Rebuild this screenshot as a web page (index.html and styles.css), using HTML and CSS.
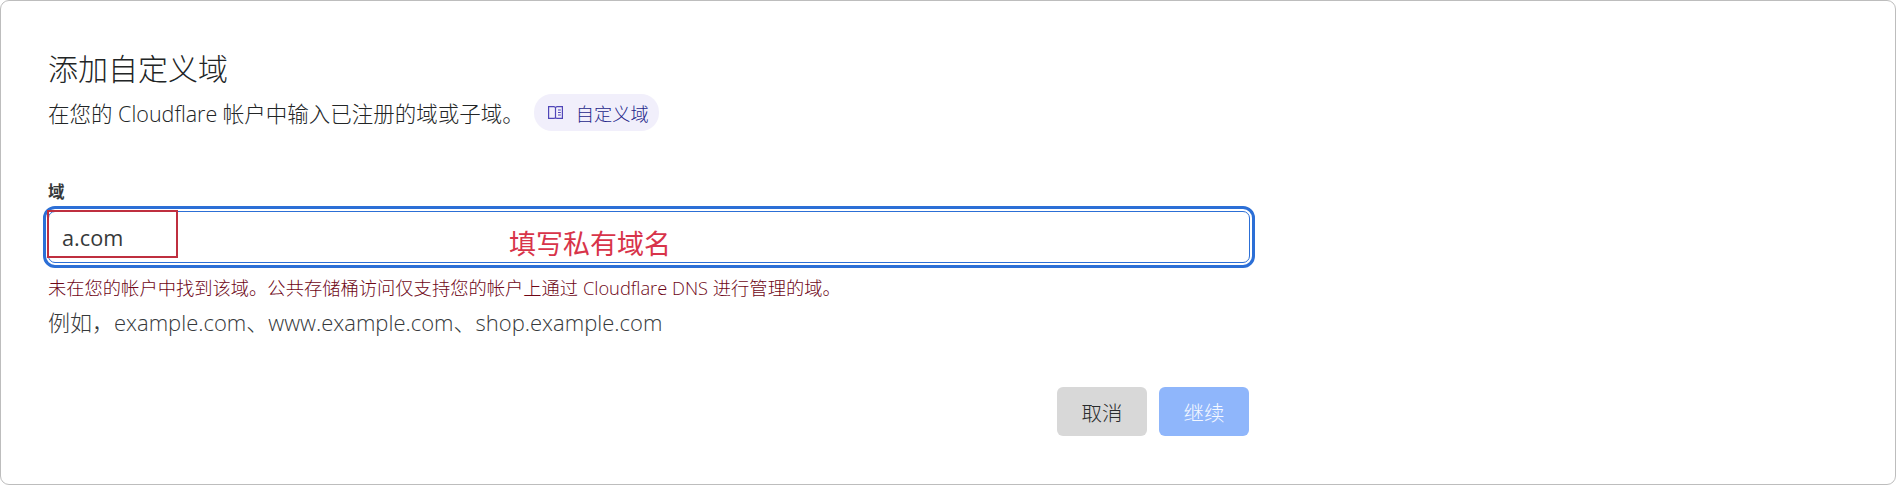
FILE: index.html
```html
<!DOCTYPE html>
<html lang="zh-CN">
<head>
    <meta charset="UTF-8">
    <meta name="viewport" content="width=device-width, initial-scale=1.0">
    <title>添加自定义域</title>
    <link rel="stylesheet" href="styles.css">
</head>
<body>

<div class="card">
    <h1>添加自定义域</h1>
    <div class="intro">
        <p>在您的 Cloudflare 帐户中输入已注册的域或子域。</p>
        <a class="doc-pill" href="#">
            <svg class="doc-icon" viewBox="0 0 15 13" fill="none" stroke="currentColor" stroke-width="1.2">
                <path d="M.6.6H6L7.500 1.500 9 .6h5.400v11.800H9L7.500 12 6 12.400H.6z"/>
                <path d="M7.500 1.500V12"/>
                <path d="M10 4h2.800M10 6.500h2.800M10 9h2.800" stroke-width="1"/>
            </svg>
            自定义域
        </a>
    </div>

    <form class="domain-form">
        <label for="domain">域</label>
        <div class="field">
            <input id="domain" type="text" value="a.com">
            <span class="mark-box"></span>
            <span class="mark-text">填写私有域名</span>
        </div>
        <p class="error">未在您的帐户中找到该域。公共存储桶访问仅支持您的帐户上通过 Cloudflare DNS 进行管理的域。</p>
        <p class="hint">例如，example.com、www.example.com、shop.example.com</p>

        <div class="actions">
            <button type="button" class="btn-cancel">取消</button>
            <button type="button" class="btn-continue">继续</button>
        </div>
    </form>
</div>

</body>
</html>
```

FILE: styles.css
```css
* {
    box-sizing: border-box;
}
body {
    margin: 0;
    background: white;
    font-family: "Open Sans", "Noto Sans CJK SC", sans-serif;
    color: #222526;
}
.card {
    height: 485px;
    padding: 48px 0 0 47px;
    border: 1px solid #bdbdbd;
    border-radius: 9px;
}
h1 {
    margin: 0;
    font-size: 30px;
    font-weight: 300;
    line-height: 40px;
}
.intro {
    display: flex;
    align-items: center;
    gap: 10px;
    margin-top: 5px;
}
.intro p {
    margin: 0;
    font-size: 21.500px;
    font-weight: 300;
}
.doc-pill {
    display: flex;
    align-items: center;
    gap: 13px;
    height: 37px;
    padding: 0 10px 0 14px;
    border-radius: 18px;
    background: #f1effb;
    color: #241f8a;
    font-size: 18.200px;
    font-weight: 300;
    text-decoration: none;
}
.doc-icon {
    width: 15px;
    height: 13px;
    color: #5046b8;
}
.domain-form {
    width: 1202px;
    margin-top: 51px;
}
label {
    display: block;
    font-size: 16.500px;
    font-weight: 700;
    line-height: 20px;
    color: #36393a;
}
.field {
    position: relative;
    margin-top: 9px;
}
input {
    display: block;
    width: 100%;
    height: 52px;
    padding: 0 13px;
    border: 1px solid #2c6fd6;
    border-radius: 7px;
    outline: 3px solid #2c6fd6;
    outline-offset: 2px;
    font-family: inherit;
    font-size: 21.700px;
    color: #36393a;
}
.mark-box {
    position: absolute;
    left: -1px;
    top: -1px;
    width: 131px;
    height: 48px;
    border: 2px solid #bf2f3f;
}
.mark-text {
    position: absolute;
    left: 461px;
    top: 13px;
    font-size: 27px;
    line-height: 40px;
    color: #d8344a;
}
.error {
    margin: 13px 0 0;
    font-size: 18.300px;
    font-weight: 300;
    line-height: 24px;
    color: #6e0616;
}
.hint {
    margin: 8px 0 0;
    font-size: 22px;
    font-weight: 300;
    line-height: 28px;
    color: #36393b;
}
.actions {
    display: flex;
    justify-content: flex-end;
    gap: 12px;
    margin-top: 51px;
    padding-right: 1px;
}
button {
    width: 90px;
    height: 49px;
    border: none;
    border-radius: 6px;
    font-family: inherit;
    font-size: 20.500px;
    font-weight: 300;
}
.btn-cancel {
    background: #d8d8d8;
    color: #2a2c2d;
}
.btn-continue {
    background: #8fb6fb;
    color: #f4f8ff;
}
```
